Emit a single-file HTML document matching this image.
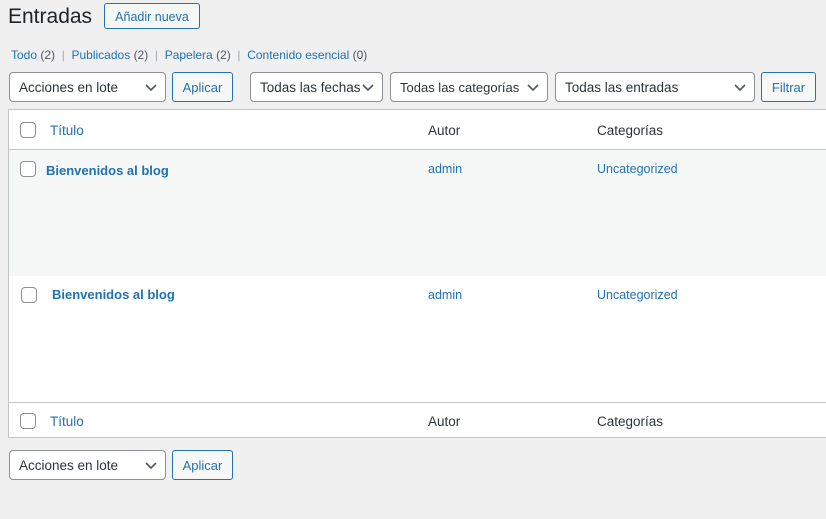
<!DOCTYPE html>
<html><head><meta charset="utf-8"><style>
*{box-sizing:border-box;margin:0;padding:0}
body{width:826px;height:519px;background:#f0f0f1;font-family:"Liberation Sans",sans-serif;font-size:13px;color:#3c434a;position:relative;overflow:hidden}
.a{position:absolute;white-space:nowrap}
a,.l{color:#2271b1;text-decoration:none}
.sel{position:absolute;height:30px;border:1px solid #8c8f94;border-radius:4px;background:#fff;font-size:13.5px;color:#2c3338;padding:7px 0 0 9px;white-space:nowrap}
.sel svg{position:absolute;right:8px;top:11px}
.btn{position:absolute;height:30px;border:1px solid #2271b1;border-radius:3px;background:#f6f7f7;color:#2271b1;font-size:13px;text-align:center;padding-top:7px}
.cb{position:absolute;width:16px;height:16px;border:1px solid #8c8f94;border-radius:4px;background:#fff}
.t{font-size:13.5px}
</style></head><body>
<div class="a" style="left:8px;top:5px;font-size:21px;color:#1d2327">Entradas</div>
<div class="a" style="left:104px;top:3px;width:96px;height:26px;border:1px solid #2271b1;border-radius:3px;background:#f6f7f7;color:#2271b1;font-size:12.5px;text-align:center;padding-top:6px">Añadir nueva</div>
<div class="a" style="left:11px;top:48px;font-size:12px;color:#a7aaad"><span class="l">Todo</span> <span style="color:#50575e">(2)</span> &nbsp;|&nbsp; <span class="l">Publicados</span> <span style="color:#50575e">(2)</span> &nbsp;|&nbsp; <span class="l">Papelera</span> <span style="color:#50575e">(2)</span> &nbsp;|&nbsp; <span class="l">Contenido esencial</span> <span style="color:#50575e">(0)</span></div>
<div class="sel" style="left:9px;top:72px;width:157px">Acciones en lote<svg width="12" height="8"><path d="M1 1l5 5 5-5" stroke="#50575e" stroke-width="1.6" fill="none"/></svg></div>
<div class="btn" style="left:172px;top:72px;width:61px">Aplicar</div>
<div class="sel" style="left:250px;top:72px;width:133px">Todas las fechas<svg width="12" height="8"><path d="M1 1l5 5 5-5" stroke="#50575e" stroke-width="1.6" fill="none"/></svg></div>
<div class="sel" style="left:390px;top:72px;width:158px;font-size:13px">Todas las categorías<svg width="12" height="8"><path d="M1 1l5 5 5-5" stroke="#50575e" stroke-width="1.6" fill="none"/></svg></div>
<div class="sel" style="left:555px;top:72px;width:200px">Todas las entradas<svg width="12" height="8"><path d="M1 1l5 5 5-5" stroke="#50575e" stroke-width="1.6" fill="none"/></svg></div>
<div class="btn" style="left:761px;top:72px;width:55px">Filtrar</div>

<div class="a" style="left:8px;top:109px;width:830px;height:329px;border:1px solid #c3c4c7;background:#fff"></div>
<div class="a" style="left:9px;top:149px;width:830px;height:1px;background:#c3c4c7"></div>
<div class="a" style="left:9px;top:150px;width:830px;height:126px;background:#f6f7f7"></div>
<div class="a" style="left:9px;top:402px;width:830px;height:1px;background:#c3c4c7"></div>

<div class="cb" style="left:20px;top:122px"></div>
<div class="a t l" style="left:50px;top:123px">Título</div>
<div class="a t" style="left:428px;top:123px;color:#2c3338">Autor</div>
<div class="a t" style="left:597px;top:123px;color:#2c3338">Categorías</div>

<div class="cb" style="left:20px;top:161px"></div>
<div class="a t l" style="left:46px;top:163px;font-weight:bold;font-size:13px">Bienvenidos al blog</div>
<div class="a l" style="left:428px;top:162px;font-size:12.5px">admin</div>
<div class="a l" style="left:597px;top:162px;font-size:12.5px">Uncategorized</div>

<div class="cb" style="left:21px;top:287px"></div>
<div class="a t l" style="left:52px;top:287px;font-weight:bold;font-size:13px">Bienvenidos al blog</div>
<div class="a l" style="left:428px;top:288px;font-size:12.5px">admin</div>
<div class="a l" style="left:597px;top:288px;font-size:12.5px">Uncategorized</div>

<div class="cb" style="left:20px;top:413px"></div>
<div class="a t l" style="left:50px;top:414px">Título</div>
<div class="a t" style="left:428px;top:414px;color:#2c3338">Autor</div>
<div class="a t" style="left:597px;top:414px;color:#2c3338">Categorías</div>

<div class="sel" style="left:9px;top:450px;width:157px">Acciones en lote<svg width="12" height="8"><path d="M1 1l5 5 5-5" stroke="#50575e" stroke-width="1.6" fill="none"/></svg></div>
<div class="btn" style="left:172px;top:450px;width:61px">Aplicar</div>
</body></html>
